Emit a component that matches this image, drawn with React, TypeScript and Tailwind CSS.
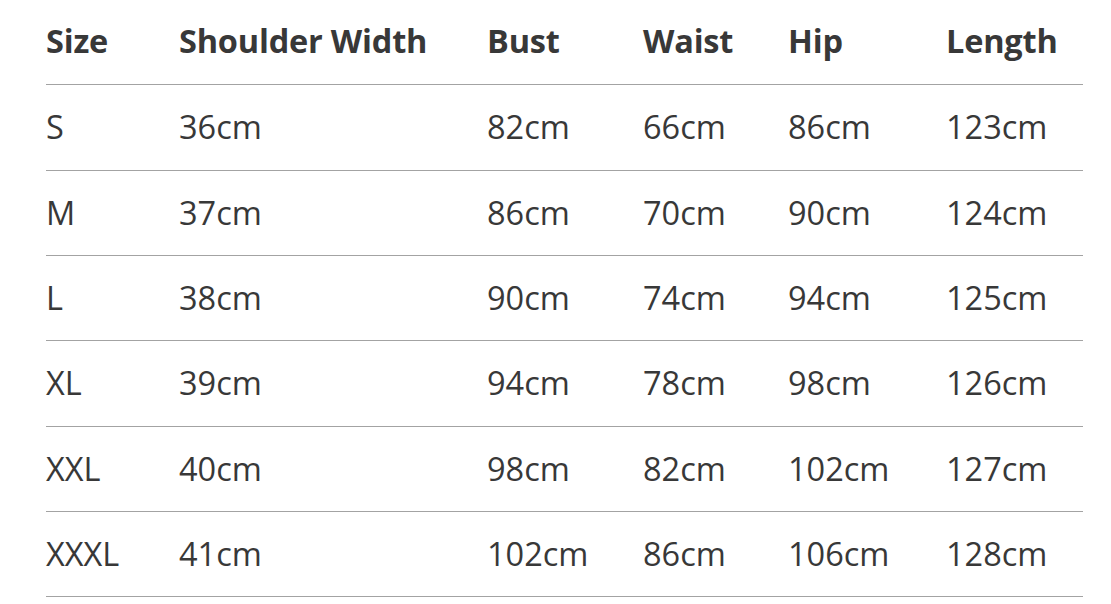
const headers = ["Size", "Shoulder Width", "Bust", "Waist", "Hip", "Length"];

const rows = [
  ["S", "36cm", "82cm", "66cm", "86cm", "123cm"],
  ["M", "37cm", "86cm", "70cm", "90cm", "124cm"],
  ["L", "38cm", "90cm", "74cm", "94cm", "125cm"],
  ["XL", "39cm", "94cm", "78cm", "98cm", "126cm"],
  ["XXL", "40cm", "98cm", "82cm", "102cm", "127cm"],
  ["XXXL", "41cm", "102cm", "86cm", "106cm", "128cm"],
];

const cols = "grid grid-cols-[133px_308px_156px_145px_158px_1fr]";

export default function App() {
  return (
    <div className="w-[1111px] h-[604px] bg-white pl-[46px] pr-[28px] font-['Open_Sans','Noto_Sans',sans-serif] text-[#383838]">
      <div className={`${cols} h-[85.33px] items-center border-b border-[#a3a3a3] pb-[1px]`}>
        {headers.map((h) => (
          <div key={h} className="text-[32.5px] font-bold tracking-[-0.2px] leading-none">
            {h}
          </div>
        ))}
      </div>
      {rows.map((r) => (
        <div
          key={r[0]}
          className={`${cols} h-[85.33px] items-center border-b border-[#a3a3a3]`}
        >
          {r.map((c, i) => (
            <div key={i} className="text-[32.5px] leading-none">
              {c}
            </div>
          ))}
        </div>
      ))}
    </div>
  );
}
